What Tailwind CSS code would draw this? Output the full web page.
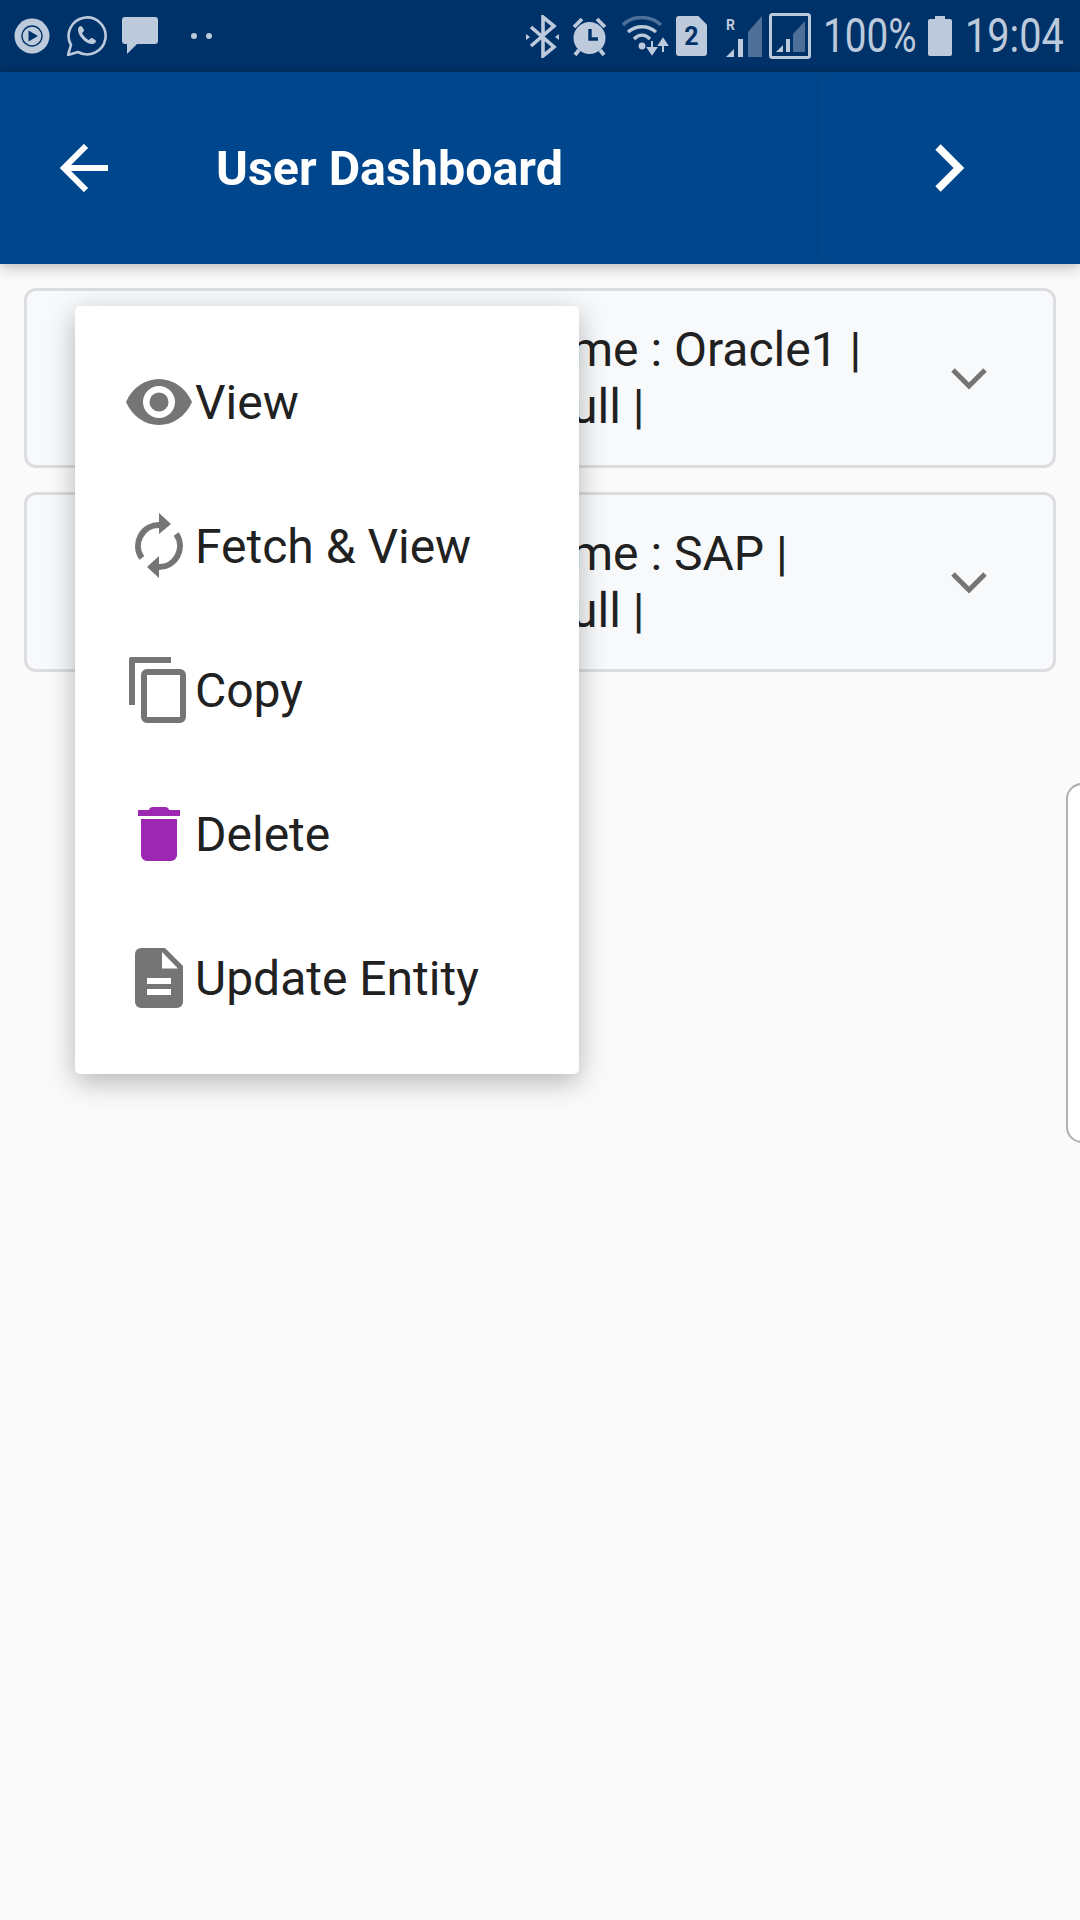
<!doctype html>
<html>
<head>
<meta charset="utf-8">
<script src="https://cdn.jsdelivr.net/npm/@tailwindcss/browser@4"></script>
</head>
<body class="m-0">
<div class="relative w-[1080px] h-[1920px] overflow-hidden bg-[#fafafa] font-['Roboto',sans-serif] text-[#212121]">
  <!-- status bar -->
  <div class="h-[72px] bg-[#00326a] flex items-center justify-between pl-[14px] pr-[18px] text-[#bccadb]">
    <div class="flex items-center">
      <svg class="w-[36px] h-[36px]" viewBox="0 0 36 36"><circle cx="18" cy="18" r="17.5" fill="#bccadb"/><circle cx="18" cy="18" r="10" fill="none" stroke="#00326a" stroke-width="1.4"/><path d="M14.5 12.5L24 18l-9.5 5.500z" fill="#00326a"/></svg>
      <svg class="ml-[17px] w-[40px] h-[40px]" viewBox="0 0 40 40"><path d="M1 39l3-10A18.500 18.500 0 1 1 11 36z" fill="none" stroke="#bccadb" stroke-width="2.600" stroke-linejoin="round"/><path d="M14 10c-2 0-3 2-3 4 0 6 8 14 14 14 2 0 4-1 4-3 0-1-4-3.500-5-3l-2 2c-2-.5-6-4.500-7-7l2-2c.5-1-2-5-3-5z" fill="#bccadb"/></svg>
      <svg class="ml-[15px] w-[36px] h-[38px]" viewBox="0 0 36 38"><path d="M3 0h30a3 3 0 0 1 3 3v21a3 3 0 0 1-3 3H15L5 37V27H3a3 3 0 0 1-3-3V3a3 3 0 0 1 3-3z" fill="#bccadb"/></svg>
      <span class="ml-[33px] w-[6px] h-[6px] rounded-full bg-[#bccadb]"></span>
      <span class="ml-[9px] w-[6px] h-[6px] rounded-full bg-[#bccadb]"></span>
    </div>
    <div class="flex items-center">
      <svg class="w-[33px] h-[43px]" viewBox="0 0 33 43"><path d="M5 12l23 20-11 9V2l11 9L5 31" fill="none" stroke="#bccadb" stroke-width="3.600"/><path d="M0 19l4 3-4 3zM33 19l-4 3 4 3z" fill="#bccadb"/></svg>
      <svg class="ml-[13px] w-[35px] h-[39px]" viewBox="0 0 35 39"><circle cx="17.500" cy="21" r="16" fill="#bccadb"/><path d="M18 12v10h8" fill="none" stroke="#00326a" stroke-width="3.400"/><path d="M2 10l8-8M33 10l-8-8M7 33l-4 5M28 33l4 5" stroke="#bccadb" stroke-width="3.800"/></svg>
      <svg class="ml-[15px] w-[47px] h-[41px]" viewBox="0 0 47 41"><path d="M1 9C10-1 29-1 39 9" fill="none" stroke="#4d6f98" stroke-width="3.400"/><path d="M6 16c8-7 20-7 28 0M12 23c5-5 11-5 16 0" fill="none" stroke="#bccadb" stroke-width="3.400"/><circle cx="20" cy="30" r="3.400" fill="#bccadb"/><path d="M30 25v9M26 32l4 6 4-6z" fill="#bccadb" stroke="#bccadb" stroke-width="2"/><path d="M41 36v-9M37 29l4-6 4 6z" fill="#bccadb" stroke="#bccadb" stroke-width="2"/></svg>
      <div class="ml-[7px] relative w-[31px] h-[40px] bg-[#bccadb] rounded-[3px] [clip-path:polygon(0_0,72%_0,100%_22%,100%_100%,0_100%)] flex items-center justify-center text-[#00326a] text-[25px] font-bold leading-none">2</div>
      <div class="ml-[19px] relative w-[36px] h-[41px]">
        <span class="absolute left-[0px] top-[1px] text-[14px] font-bold leading-[16px]">R</span>
        <svg class="absolute inset-0 w-[36px] h-[41px]" viewBox="0 0 36 41"><path d="M0 41l8-8v8zM12 41V23h5v18z" fill="#bccadb"/><path d="M22 41V16L36 0v41z" fill="#4d6f98"/></svg>
      </div>
      <svg class="ml-[7px] w-[42px] h-[46px]" viewBox="0 0 42 46"><rect x="1.500" y="1.500" width="39" height="43" rx="2" fill="none" stroke="#bccadb" stroke-width="3"/><path d="M7 39l7-7v7zM17 39V26h4v13z" fill="#bccadb"/><path d="M24 39V21L36 8v31z" fill="#4d6f98"/></svg>
      <div class="ml-[12px] w-[92px] h-[46px]"><span class="block text-[49px] leading-[46px] scale-x-[.79] origin-left whitespace-nowrap">100%</span></div>
      <svg class="ml-[13px] w-[24px] h-[40px]" viewBox="0 0 24 40"><path d="M7 0h10v3h5a2 2 0 0 1 2 2v33a2 2 0 0 1-2 2H2a2 2 0 0 1-2-2V5a2 2 0 0 1 2-2h5z" fill="#bccadb"/></svg>
      <div class="ml-[13px] w-[97px] h-[46px]"><span class="block text-[49px] leading-[46px] scale-x-[.81] origin-left whitespace-nowrap">19:04</span></div>
    </div>
  </div>
  <!-- app bar -->
  <header class="relative h-[192px] bg-[#00468c] flex items-center shadow-[0_2px_14px_rgba(0,0,0,0.3)] text-white">
    <svg class="absolute left-[60px] top-[72px] w-[48px] h-[48px]" viewBox="0 0 48 48"><path d="M48 24H4M26 2L4 24l22 22" fill="none" stroke="#fff" stroke-width="6"/></svg>
    <h1 class="ml-[216px] mt-[2px] text-[48.4px] font-bold leading-none">User Dashboard</h1>
    <div class="absolute left-[816px] right-0 inset-y-0 border-l-2 border-[#004386] rounded-l-[14px]"></div>
    <svg class="absolute left-[930px] top-[72px] w-[36px] h-[48px]" viewBox="0 0 36 48"><path d="M8 3l21 21L8 45" fill="none" stroke="#fff" stroke-width="7.500"/></svg>
  </header>
  <!-- list -->
  <main class="px-[24px] pt-[24px] flex flex-col gap-[24px]">
    <div class="relative h-[180px] border-[3px] border-[#dcdde0] rounded-[12px] bg-[#f8f9fb] text-[48px] leading-[57px]">
      <div class="absolute left-[24px] top-[30px] w-[880px] h-[114px]">
        <div class="pl-[520px] whitespace-nowrap">me : Oracle1 |</div>
        <div class="pl-[520px] whitespace-nowrap">ull |</div>
      </div>
      <svg class="absolute left-[924px] top-[76px] w-[36px] h-[24px]" viewBox="0 0 36 24"><path d="M2 3l16 16L34 3" fill="none" stroke="#757575" stroke-width="5"/></svg>
    </div>
    <div class="relative h-[180px] border-[3px] border-[#dcdde0] rounded-[12px] bg-[#f8f9fb] text-[48px] leading-[57px]">
      <div class="absolute left-[24px] top-[30px] w-[880px] h-[114px]">
        <div class="pl-[520px] whitespace-nowrap">me : SAP |</div>
        <div class="pl-[520px] whitespace-nowrap">ull |</div>
      </div>
      <svg class="absolute left-[924px] top-[76px] w-[36px] h-[24px]" viewBox="0 0 36 24"><path d="M2 3l16 16L34 3" fill="none" stroke="#757575" stroke-width="5"/></svg>
    </div>
  </main>
  <!-- peeking side panel -->
  <div class="absolute left-[1066px] top-[783px] w-[40px] h-[360px] bg-white border-2 border-[#b0b0b0] rounded-[16px]"></div>
  <!-- popup menu -->
  <div class="absolute left-[75px] top-[306px] w-[504px] h-[768px] bg-white rounded-[5px] shadow-[0_8px_28px_rgba(0,0,0,0.28)] py-[24px] flex flex-col text-[48px] pl-[48px]">
    <div class="h-[144px] flex items-center">
      <div class="w-[72px] flex justify-center">
        <svg class="w-[66px] h-[46px]" viewBox="0 0 66 46"><path fill-rule="evenodd" d="M0 23C6 9 19 0 33 0s27 9 33 23c-6 14-19 23-33 23S6 37 0 23zm33 16a16 16 0 1 0 0-32 16 16 0 0 0 0 32z" fill="#757575"/><circle cx="33" cy="23" r="9.500" fill="#757575"/></svg>
      </div>
      <span class="mt-[2px]">View</span>
    </div>
    <div class="h-[144px] flex items-center">
      <div class="w-[72px] flex justify-center">
        <svg class="w-[48px] h-[66px]" viewBox="0 0 48 66"><path d="M24 0l12 11-12 10zM24 65L12 54l12-11z" fill="#757575"/><path d="M25 12A21 21 0 0 0 6.800 45M23 54A21 21 0 0 0 41.200 21" fill="none" stroke="#757575" stroke-width="6"/></svg>
      </div>
      <span class="mt-[2px]">Fetch &amp; View</span>
    </div>
    <div class="h-[144px] flex items-center">
      <div class="w-[72px] flex justify-center">
        <svg class="w-[60px] h-[66px]" viewBox="0 0 60 66"><path d="M2 0h40v6H6v42H0V2a2 2 0 0 1 2-2z" fill="#757575"/><rect x="15" y="15" width="39" height="48" rx="3" fill="none" stroke="#757575" stroke-width="6"/></svg>
      </div>
      <span class="mt-[2px]">Copy</span>
    </div>
    <div class="h-[144px] flex items-center">
      <div class="w-[72px] flex justify-center">
        <svg class="w-[42px] h-[54px]" viewBox="0 0 42 54"><path d="M11 3c0-2 2-3 4-3h12c2 0 4 1 4 3h11v6H0V3zM3 12h36v36a6 6 0 0 1-6 6H9a6 6 0 0 1-6-6z" fill="#9c27b0"/></svg>
      </div>
      <span class="mt-[2px]">Delete</span>
    </div>
    <div class="h-[144px] flex items-center">
      <div class="w-[72px] flex justify-center">
        <svg class="w-[48px] h-[60px]" viewBox="0 0 48 60"><path fill-rule="evenodd" d="M6 0h24l18 18v36a6 6 0 0 1-6 6H6a6 6 0 0 1-6-6V6a6 6 0 0 1 6-6zm21 4v16.500h16zM12 30v6h24v-6zm0 11v6h24v-6z" fill="#757575"/></svg>
      </div>
      <span class="mt-[2px]">Update Entity</span>
    </div>
  </div>
</div>
</body>
</html>
